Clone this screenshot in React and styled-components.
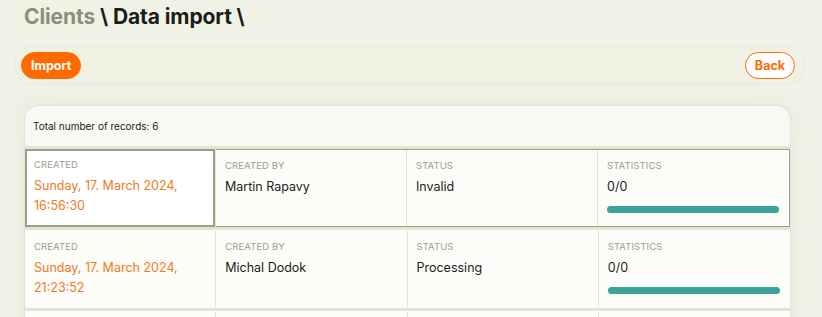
import React from 'react';
import styled, { createGlobalStyle } from 'styled-components';

const GlobalStyle = createGlobalStyle`
  html, body {
    margin: 0;
    padding: 0;
    background: #f0f2e5;
    font-family: Inter, "Noto Sans", sans-serif;
    color: #1c1c1a;
    overflow: hidden;
  }
`;

const Page = styled.div`
  width: 822px;
  height: 317px;
  overflow: hidden;
  padding-top: 4px;
  box-sizing: border-box;
`;

const Title = styled.h1`
  margin: 0 0 0 24px;
  font-size: 21px;
  line-height: 25px;
  font-weight: 700;
  letter-spacing: -0.1px;
  color: #1c1c1a;

  span {
    color: #8b8f7c;
  }
`;

const Toolbar = styled.div`
  margin: 17px 16px 0 14px;
  height: 37px;
  padding: 0 10px 0 6px;
  display: flex;
  align-items: center;
  justify-content: space-between;
  border: 1px solid #e8eadb;
  border-radius: 20px;
  background: #eff1e3;
`;

const Button = styled.button`
  height: 27px;
  padding: 0 9px;
  border-radius: 14px;
  font-family: inherit;
  font-size: 12.5px;
  font-weight: 700;
  cursor: pointer;
  border: 1.5px solid #ff6a00;
  background: ${(p) => (p.outline ? '#ffffff' : '#ff6a00')};
  color: ${(p) => (p.outline ? '#ff6a00' : '#ffffff')};
`;

const Card = styled.div`
  margin: 20px 31px 0 24px;
  border: 1px solid #e2e4d2;
  border-bottom: none;
  border-radius: 14px 14px 0 0;
  background: #f9f9f3;
  box-shadow: 0 0 24px rgba(120, 125, 90, 0.08);
  overflow: hidden;
`;

const Summary = styled.div`
  height: 40px;
  display: flex;
  align-items: center;
  padding: 0 8px;
  font-size: 10px;
  color: #1c1c1a;
`;

const Rows = styled.div`
  display: flex;
  flex-direction: column;
  gap: 3px;
  padding-top: 3px;
  background: #e3e5d3;
`;

const Row = styled.div`
  display: grid;
  grid-template-columns: repeat(4, 1fr);
  height: 78px;
  background: #fcfcf9;
  box-sizing: border-box;
  border: 1px solid ${(p) => (p.selected ? '#9d9f8b' : 'transparent')};
  border-left: none;
  border-right: ${(p) => (p.selected ? '1px solid #9d9f8b' : 'none')};
`;

const Cell = styled.div`
  padding: 10px 10px 0 9px;
  display: flex;
  flex-direction: column;
  border-right: 1px solid #e3e5d3;
  background: ${(p) => (p.focused ? '#ffffff' : 'transparent')};
  box-shadow: ${(p) => (p.focused ? 'inset 0 0 0 2px #9d9f8b' : 'none')};
  margin: ${(p) => (p.focused ? '-1px 0' : '0')};

  &:last-child {
    border-right: none;
  }
`;

const Label = styled.div`
  font-size: 9.5px;
  line-height: 12px;
  text-transform: uppercase;
  color: #9c9e8c;
  letter-spacing: 0.1px;
`;

const Value = styled.div`
  margin-top: 5px;
  font-size: 12.5px;
  line-height: 20px;
  color: ${(p) => (p.accent ? '#f47a22' : '#1c1c1a')};
`;

const Progress = styled.div`
  margin-top: 9px;
  height: 7px;
  border-radius: 4px;
  background: #3aa39a;
`;

const records = [
  { date: 'Sunday, 17. March 2024,', time: '16:56:30', by: 'Martin Rapavy', status: 'Invalid', stats: '0/0' },
  { date: 'Sunday, 17. March 2024,', time: '21:23:52', by: 'Michal Dodok', status: 'Processing', stats: '0/0' },
  { date: 'Sunday, 17. March 2024,', time: '22:10:04', by: 'Martin Rapavy', status: 'Finished', stats: '0/0' },
];

export default function App() {
  return (
    <Page>
      <GlobalStyle />
      <Title>
        <span>Clients</span> \ Data import \
      </Title>
      <Toolbar>
        <Button>Import</Button>
        <Button outline>Back</Button>
      </Toolbar>
      <Card>
        <Summary>Total number of records: 6</Summary>
        <Rows>
          {records.map((r, i) => (
            <Row key={i} selected={i === 0}>
              <Cell focused={i === 0}>
                <Label>Created</Label>
                <Value accent>
                  {r.date}
                  <br />
                  {r.time}
                </Value>
              </Cell>
              <Cell>
                <Label>Created by</Label>
                <Value>{r.by}</Value>
              </Cell>
              <Cell>
                <Label>Status</Label>
                <Value>{r.status}</Value>
              </Cell>
              <Cell>
                <Label>Statistics</Label>
                <Value>{r.stats}</Value>
                <Progress />
              </Cell>
            </Row>
          ))}
        </Rows>
      </Card>
    </Page>
  );
}
